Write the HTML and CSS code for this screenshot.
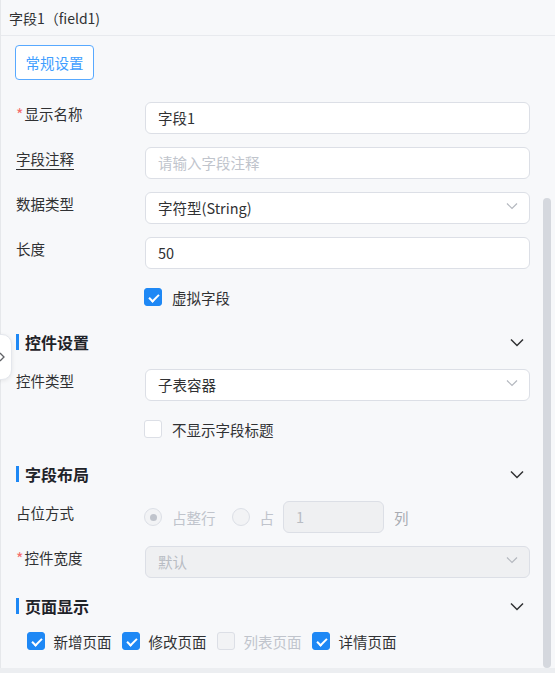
FILE: index.html
```html
<!DOCTYPE html>
<html lang="zh-CN">
<head>
    <meta charset="UTF-8">
    <title>字段属性</title>
    <link rel="stylesheet" href="styles.css">
</head>
<body>
    <div class="panel">
        <div class="panel-header">字段1（field1)</div>

        <div class="panel-body">
            <button class="tab-button">常规设置</button>

            <div class="form">
                <div class="form-row">
                    <label class="form-label"><span class="required">*</span>显示名称</label>
                    <div class="input">字段1</div>
                </div>
                <div class="form-row">
                    <label class="form-label"><span class="tip">字段注释</span></label>
                    <div class="input placeholder">请输入字段注释</div>
                </div>
                <div class="form-row">
                    <label class="form-label">数据类型</label>
                    <div class="input select">
                        字符型(String)
                        <svg class="select-arrow" width="12" height="8" viewBox="0 0 12 8"><path d="M1 1.5l5 5 5-5" fill="none" stroke="#b4b8bf" stroke-width="1.2"/></svg>
                    </div>
                </div>
                <div class="form-row">
                    <label class="form-label">长度</label>
                    <div class="input">50</div>
                </div>
                <div class="check-row">
                    <span class="checkbox checked"></span>
                    <span>虚拟字段</span>
                </div>
            </div>

            <div class="section-title">
                <span>控件设置</span>
                <svg class="section-arrow" width="14" height="9" viewBox="0 0 14 9"><path d="M1 1.5l6 6 6-6" fill="none" stroke="#303133" stroke-width="1.5"/></svg>
            </div>
            <div class="form">
                <div class="form-row">
                    <label class="form-label">控件类型</label>
                    <div class="input select">
                        子表容器
                        <svg class="select-arrow" width="12" height="8" viewBox="0 0 12 8"><path d="M1 1.5l5 5 5-5" fill="none" stroke="#b4b8bf" stroke-width="1.2"/></svg>
                    </div>
                </div>
                <div class="check-row">
                    <span class="checkbox"></span>
                    <span>不显示字段标题</span>
                </div>
            </div>

            <div class="section-title">
                <span>字段布局</span>
                <svg class="section-arrow" width="14" height="9" viewBox="0 0 14 9"><path d="M1 1.5l6 6 6-6" fill="none" stroke="#303133" stroke-width="1.5"/></svg>
            </div>
            <div class="form">
                <div class="form-row">
                    <label class="form-label">占位方式</label>
                    <div class="radio-group">
                        <span class="radio checked"></span>
                        <span class="muted">占整行</span>
                        <span class="radio"></span>
                        <span class="muted">占</span>
                        <div class="input small disabled">1</div>
                        <span class="unit">列</span>
                    </div>
                </div>
                <div class="form-row">
                    <label class="form-label"><span class="required">*</span>控件宽度</label>
                    <div class="input select disabled">
                        默认
                        <svg class="select-arrow" width="12" height="8" viewBox="0 0 12 8"><path d="M1 1.5l5 5 5-5" fill="none" stroke="#b4b8bf" stroke-width="1.2"/></svg>
                    </div>
                </div>
            </div>

            <div class="section-title">
                <span>页面显示</span>
                <svg class="section-arrow" width="14" height="9" viewBox="0 0 14 9"><path d="M1 1.5l6 6 6-6" fill="none" stroke="#303133" stroke-width="1.5"/></svg>
            </div>
            <div class="page-checks">
                <span class="checkbox checked"></span><span>新增页面</span>
                <span class="checkbox checked"></span><span>修改页面</span>
                <span class="checkbox disabled"></span><span class="muted">列表页面</span>
                <span class="checkbox checked"></span><span>详情页面</span>
            </div>
        </div>

        <!-- collapse handle on the left edge -->
        <div class="collapse-handle">
            <svg width="8" height="10" viewBox="0 0 8 10"><path d="M1 1l4 4-4 4" fill="none" stroke="#606266" stroke-width="1.3"/></svg>
        </div>
        <div class="scroll-thumb"></div>
    </div>
</body>
</html>
```

FILE: styles.css
```css
* {
    margin: 0;
    padding: 0;
    box-sizing: border-box;
}

body {
    font-family: "Noto Sans CJK SC", "Noto Sans", sans-serif;
    font-size: 14.5px;
    color: #303133;
    background: #eceef1;
    width: 555px;
    height: 673px;
    overflow: hidden;
}

.panel {
    position: relative;
    height: 668px;
    background: #f7f8fa;
    border-left: 1px solid #e6e8eb;
}

.panel-header {
    height: 36px;
    line-height: 36px;
    padding-left: 8px;
    font-size: 14px;
    color: #303133;
    border-bottom: 1px solid #e8eaee;
}

.panel-body {
    padding: 9px 25px 0 14px;
}

.tab-button {
    display: block;
    width: 79px;
    height: 35px;
    font-family: inherit;
    font-size: 14.5px;
    color: #409eff;
    background: #fff;
    border: 1px solid #58a9ff;
    border-radius: 4px;
}

.form {
    padding-left: 1px;
}

.tab-button + .form {
    margin-top: 22px;
}

.form-row {
    display: flex;
    align-items: flex-start;
    margin-bottom: 13px;
}

.form-label {
    width: 129px;
    flex-shrink: 0;
    line-height: 24px;
    color: #303133;
}

.required {
    display: inline-block;
    font-size: 16px;
    color: #f56c6c;
    margin-right: 1px;
    vertical-align: -1px;
}

.tip {
    border-bottom: 1px solid #303133;
}

.input {
    position: relative;
    flex: 1;
    height: 32px;
    line-height: 30px;
    padding: 0 12px;
    background: #fff;
    border: 1px solid #dcdfe6;
    border-radius: 6px;
    color: #303133;
}

.input.placeholder {
    color: #c0c4cc;
}

.input.disabled {
    background: #eff0f2;
    border-color: #dcdfe6;
    color: #b8bcc3;
}

.input.small {
    flex: none;
    width: 101px;
}

.select-arrow {
    position: absolute;
    right: 11px;
    top: 9px;
}

.check-row {
    display: flex;
    align-items: center;
    gap: 10px;
    height: 18px;
    margin: 19px 0 24px 128px;
}

.checkbox {
    width: 18px;
    height: 18px;
    flex-shrink: 0;
    border: 1px solid #dcdfe6;
    border-radius: 3px;
    background: #fff;
    position: relative;
}

.checkbox.checked {
    background: #1e88f5;
    border-color: #1e88f5;
}

.checkbox.checked::after {
    content: "";
    position: absolute;
    left: 5.5px;
    top: 2.5px;
    width: 4px;
    height: 8px;
    border: solid #fff;
    border-width: 0 2px 2px 0;
    transform: rotate(45deg);
}

.checkbox.disabled {
    background: #f2f3f5;
    border-color: #dcdfe6;
}

.section-title {
    position: relative;
    display: flex;
    align-items: center;
    height: 24px;
    margin-top: 16px;
    padding-left: 10px;
    font-size: 16px;
    font-weight: 700;
    color: #1f2329;
}

.section-title::before {
    content: "";
    position: absolute;
    left: 1px;
    top: 4px;
    width: 3px;
    height: 16px;
    background: #1e88f5;
}

.section-arrow {
    margin-left: auto;
    margin-right: 6px;
}

.section-title + .form {
    margin-top: 15px;
}

.radio-group {
    display: flex;
    align-items: center;
    height: 32px;
    margin-left: -1px;
}

.radio {
    width: 18px;
    height: 18px;
    border-radius: 50%;
    border: 1px solid #dcdfe6;
    background: #f2f3f5;
    position: relative;
    margin-right: 10px;
}

.radio.checked::after {
    content: "";
    position: absolute;
    left: 4.5px;
    top: 4.5px;
    width: 7px;
    height: 7px;
    border-radius: 50%;
    background: #c0c4cc;
}

.muted {
    color: #c0c4cc;
}

.radio-group .muted {
    margin-right: 16px;
}

.radio-group .muted + .input {
    margin-left: -7px;
}

.unit {
    margin-left: 10px;
    color: #a8abb2;
}

.page-checks {
    display: flex;
    align-items: center;
    height: 24px;
    margin-top: 11px;
    padding-left: 12px;
}

.page-checks .checkbox {
    margin-right: 8.5px;
}

.page-checks span:not(.checkbox) {
    margin-right: 10.5px;
}

.collapse-handle {
    position: absolute;
    left: -14px;
    top: 334px;
    width: 25px;
    height: 46px;
    background: #fff;
    border: 1px solid #e4e7ed;
    border-radius: 10px;
    box-shadow: 0 1px 4px rgba(0, 0, 0, 0.08);
    display: flex;
    align-items: center;
    justify-content: flex-end;
    padding-right: 4px;
}

.scroll-thumb {
    position: absolute;
    right: 4px;
    top: 198px;
    bottom: 0;
    width: 8px;
    border-radius: 4px;
    background: #d5d8de;
}
```
